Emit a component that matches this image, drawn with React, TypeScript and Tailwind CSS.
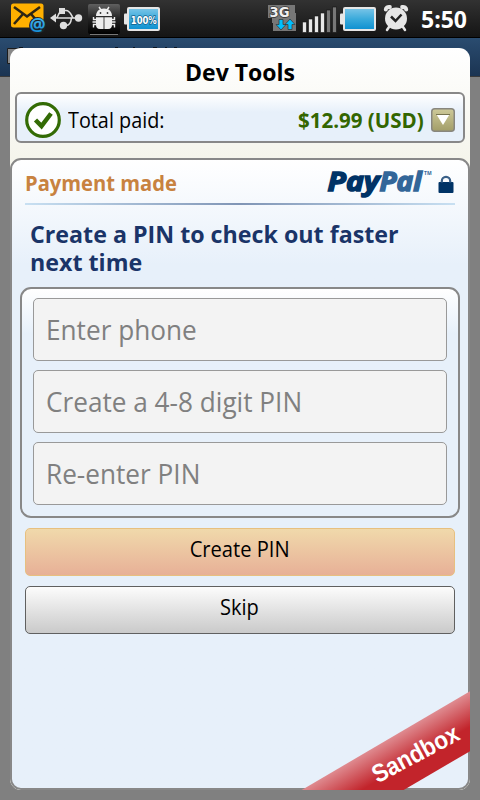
import type { ReactNode } from "react";

const FONT = "font-['Open_Sans','Noto_Sans',sans-serif]";

function StatusBar() {
  return (
    <header className="flex h-[38px] w-full shrink-0 border-b border-black bg-linear-to-b from-[#323232] to-[#151515]">
      <svg width="480" height="37" viewBox="0 0 480 37">
        <defs>
          <linearGradient id="cell" x1="0" y1="0" x2="0" y2="1">
            <stop offset="0" stopColor="#7cc6e8" />
            <stop offset="0.5" stopColor="#3aaadb" />
            <stop offset="1" stopColor="#0c8fd0" />
          </linearGradient>
          <linearGradient id="tile" x1="0" y1="0" x2="0" y2="1">
            <stop offset="0" stopColor="#606060" />
            <stop offset="0.5" stopColor="#222" />
            <stop offset="1" stopColor="#000" />
          </linearGradient>
          <linearGradient id="at" x1="0" y1="0" x2="0" y2="1">
            <stop offset="0" stopColor="#5cc8f8" />
            <stop offset="1" stopColor="#0a86d0" />
          </linearGradient>
        </defs>
        <rect x="11" y="3.500" width="32.500" height="24" rx="2.500" fill="#ffb000" />
        <path d="M14 7l13 9.500L40 7M14 24l9-10M38 22l-7-8" fill="none" stroke="#2d2614" strokeWidth="2.600" />
        <circle cx="37.500" cy="25.500" r="8.500" fill="#1d2226" />
        <text x="37.500" y="30.500" textAnchor="middle" fontFamily="Open Sans, sans-serif" fontSize="18" fontWeight="700" fill="url(#at)">@</text>
        <g fill="#dedede">
          <path d="M50 18l6-4.500v9z" />
          <rect x="59" y="8" width="6" height="6" />
          <circle cx="63.500" cy="25.500" r="3.700" />
          <circle cx="78.500" cy="18" r="3.700" />
        </g>
        <path d="M55 18h22M64 10.500h2c4 0 5 4 7 7.500M56 18c3-1 2-6 5-6M64 25.500h2c4 0 5-3 5.500-7.500" fill="none" stroke="#dedede" strokeWidth="1.600" />
        <rect x="88" y="4" width="32" height="30" rx="2" fill="url(#tile)" />
        <path d="M90 34.500h28" stroke="#777" />
        <g fill="#eee">
          <path d="M96 16c0-4.500 3-7.500 8-7.500s8 3 8 7.500z" />
          <path d="M96 17.200h7.600V29H100c-3 0-4-2-4-4zM104.400 17.200h7.600V25c0 2-1 4-4 4h-3.600z" />
        </g>
        <path d="M99 7l2 3M109 7l-2 3M96 19.500h-2.500v-2.500M112 19.500h2.500v-2.500M96 22h-3.500M112 22h3.500M96 24.500h-2.500v3M112 24.500h2.500v3" fill="none" stroke="#eee" strokeWidth="1.400" />
        <circle cx="100.500" cy="13" r="0.900" fill="#333" />
        <circle cx="107.500" cy="13" r="0.900" fill="#333" />
        <rect x="124" y="13.500" width="4" height="11" rx="1" fill="#e6e6e6" />
        <rect x="128" y="8" width="31" height="22" rx="1" fill="url(#cell)" stroke="#e6e6e6" strokeWidth="2" />
        <text x="143.800" y="23.500" textAnchor="middle" textLength="26" lengthAdjust="spacingAndGlyphs" fontFamily="DejaVu Sans, sans-serif" fontSize="11" fontWeight="700" fill="#fff" stroke="#13608c" strokeWidth="1.600" paintOrder="stroke">100%</text>

        <path d="M268 5h27v8h1v10h-24v-5h-4z" fill="#777" />
        <path d="M273 13h23v18h-23z" fill="#777" />
        <text x="269.500" y="17" textLength="20" lengthAdjust="spacingAndGlyphs" fontFamily="DejaVu Sans, sans-serif" fontSize="14" fontWeight="700" fill="#f0f0f0" stroke="#333" strokeWidth="1.500" paintOrder="stroke">3G</text>
        <path d="M279 19.500h4v5h3l-5 5.500-5-5.500h3zM288 29.500h4v-5h3l-5-5.500-5 5.500h3z" fill="#00c0ff" stroke="#333" strokeWidth="0.700" />
        <g stroke="#111" strokeWidth="0.600">
          <path d="M302.500 22h4v10.500h-4zM308.500 19h4v13.500h-4zM314.500 16h4v16.500h-4zM320.500 13h4v19.500h-4z" fill="#e8e8e8" />
          <path d="M326.500 10h4v22.500h-4zM332.500 7h4v25.500h-4z" fill="#777" />
        </g>
        <rect x="340" y="13.500" width="4" height="11" rx="1" fill="#e6e6e6" />
        <rect x="344" y="8" width="31" height="22" rx="1" fill="url(#cell)" stroke="#e6e6e6" strokeWidth="2" />
        <g stroke="#e6e6e6" fill="none" strokeLinecap="round">
          <path d="M385.800 9.500c0-1.500 2-3 4-2.500M406.200 9.500c0-1.500-2-3-4-2.500" strokeWidth="4" />
          <path d="M389 27l-2 3M403 27l2 3" strokeWidth="2.500" />
        </g>
        <circle cx="396" cy="18.500" r="11" fill="#e6e6e6" />
        <path d="M391 16.500l4.500 4.500 6-6.500" fill="none" stroke="#222" strokeWidth="2.500" />
        <text x="421" y="28" textLength="46" lengthAdjust="spacingAndGlyphs" fontFamily="Open Sans, sans-serif" fontSize="24" fontWeight="700" fill="#fff">5:50</text>
      </svg>
    </header>
  );
}

function Field({ children }: { children: ReactNode }) {
  return (
    <div className="flex h-[63px] items-center rounded-[5px] border border-[#999] bg-[#f3f3f3] pb-px pl-3 text-[28px] leading-none text-[#808080]">
      <span className="inline-block origin-left scale-x-[0.935] whitespace-nowrap">{children}</span>
    </div>
  );
}

function PayPalLogo() {
  return (
    <svg width="128" height="38" viewBox="0 0 128 38" className="shrink-0 overflow-visible">
      <g fontFamily="Open Sans, sans-serif" fontSize="27.500" fontWeight="700" fontStyle="italic" strokeWidth="1.500">
        <text x="0.500" y="28" textLength="52" lengthAdjust="spacingAndGlyphs" fill="#003366" stroke="#003366">Pay</text>
        <text x="52.500" y="28" textLength="42" lengthAdjust="spacingAndGlyphs" fill="#336699" stroke="#336699">Pal</text>
      </g>
      <text x="97" y="12" fontFamily="Open Sans, sans-serif" fontSize="5" fontWeight="700" fill="#336699">TM</text>
      <rect x="111.500" y="19" width="15" height="11" rx="1" fill="#003366" />
      <path d="M114.800 19.500V18a4.200 4.200 0 0 1 8.400 0v1.500" fill="none" stroke="#3a6088" strokeWidth="2.200" />
    </svg>
  );
}

export default function App() {
  return (
    <div className={`${FONT} flex h-[800px] w-[480px] flex-col overflow-hidden bg-[#808080] text-black`}>
      <StatusBar />
      <div className="h-[39px] shrink-0 border-b border-[#3a3a3a] bg-linear-to-b from-[#2a4c70] to-[#1b3452]">
        <svg width="200" height="30" viewBox="0 0 200 30">
          <path d="M7.500 10.500h14v15h-14z" fill="#888" stroke="#1c1c1c" />
          <path d="M19 9h4v2h-4zM115 9h3v2h-3zM133 9h2v2h-2zM153 9h4v2h-4zM165 9h2v2h-2zM174 9h3v2h-3z" fill="#0c1520" />
        </svg>
      </div>
      <main className="relative mx-[10px] -mt-[29px] flex h-[742px] shrink-0 flex-col overflow-hidden rounded-[11px] bg-linear-to-b from-white to-[#f5f5ec] to-[110px]">
        <h1 className="flex h-11 shrink-0 items-center justify-center pt-[5px] text-[23px] leading-none font-bold">
          <span className="inline-block">Dev Tools</span>
        </h1>
        <section className="mx-[5px] flex h-[51px] shrink-0 items-center rounded-[6px] border-2 border-[#888] bg-linear-to-b from-white to-[#e7f0fa] to-[18px] px-2 pt-1">
          <svg width="36" height="36" viewBox="0 0 36 36" className="shrink-0">
            <circle cx="18" cy="18" r="16.300" fill="#fff" stroke="#336b05" strokeWidth="3.200" />
            <path d="M10.500 18l6 6L26 11.500" fill="none" stroke="#336b05" strokeWidth="4.500" />
          </svg>
          <span className="ml-[7px] inline-block w-[130px] origin-left scale-x-[0.9] pb-[2px] text-[22px] leading-none">Total paid:</span>
          <span className="ml-auto inline-block origin-right scale-x-[0.955] text-[21.500px] leading-none font-bold whitespace-nowrap text-[#336600]">$12.99 (USD)</span>
          <svg width="24" height="24" viewBox="0 0 24 24" className="ml-[7px] shrink-0">
            <defs>
              <linearGradient id="olive" x1="0" y1="0" x2="0" y2="1">
                <stop offset="0" stopColor="#ceca9a" />
                <stop offset="1" stopColor="#a29d68" />
              </linearGradient>
            </defs>
            <rect x="0.750" y="0.750" width="22.500" height="22.500" rx="3" fill="url(#olive)" stroke="#88867e" strokeWidth="1.500" />
            <path d="M5.500 6.500h13L12 17z" fill="#fff" />
            <path d="M5 6.500h14" stroke="#77744f" />
          </svg>
        </section>
        <section className="mt-[15px] flex h-[632px] shrink-0 flex-col rounded-[11px] border-2 border-[#888] bg-linear-to-b from-white to-[#e7f0fa] to-[105px]">
          <div className="mr-[13px] ml-[13px] flex h-[43px] shrink-0 items-center justify-between">
            <h2 className="origin-left scale-x-[0.96] pt-[3px] text-[21px] leading-none font-bold whitespace-nowrap text-[#c88240]">Payment made</h2>
            <PayPalLogo />
          </div>
          <div className="mx-[13px] h-[2px] shrink-0 bg-linear-to-r from-[#c8e0f2] via-[#8095b5] to-[#c8e0f2]" />
          <h2 className="mt-[15px] ml-[18px] h-14 shrink-0 origin-left scale-x-[0.988] text-[23.500px] leading-[28px] font-bold whitespace-nowrap text-[#1a3468]">
            Create a PIN to check out faster
            <br />
            next time
          </h2>
          <div className="mx-2 mt-[11px] flex h-[231px] shrink-0 flex-col gap-[9px] rounded-[11px] border-2 border-[#888] bg-linear-to-b from-white to-[#e7f0fa] to-[45px] px-[11px] pt-[9px]">
            <Field>Enter phone</Field>
            <Field>Create a 4-8 digit PIN</Field>
            <Field>Re-enter PIN</Field>
          </div>
          <button className="mx-[13px] mt-[10px] flex h-12 shrink-0 items-center justify-center rounded-[5px] border border-[#e7c080] bg-linear-to-b from-[#f0d9ab] to-[#e7b097] pr-px pb-[8px] text-[22px] leading-none">
            <span className="inline-block scale-x-[0.915]">Create PIN</span>
          </button>
          <button className="mx-[13px] mt-[10px] flex h-12 shrink-0 items-center justify-center rounded-[5px] border border-[#606060] bg-linear-to-b from-[#fcfcfc] to-[#cacaca] pr-[2px] pb-[8px] text-[22px] leading-none">
            <span className="inline-block scale-x-[0.91]">Skip</span>
          </button>
        </section>
        <svg width="170" height="102" viewBox="300 688 170 102" className="absolute right-0 bottom-0">
          <defs>
            <linearGradient id="ribbon" gradientUnits="userSpaceOnUse" x1="380" y1="744" x2="408" y2="792">
              <stop offset="0" stopColor="#df8b90" />
              <stop offset="0.550" stopColor="#c2242b" />
              <stop offset="1" stopColor="#c2242b" />
            </linearGradient>
          </defs>
          <path d="M300 791L472 690v60l-70 41z" fill="url(#ribbon)" />
          <text transform="translate(377.500 783.500) rotate(-28)" textLength="95" lengthAdjust="spacingAndGlyphs" fontFamily="Liberation Sans, sans-serif" fontSize="25" fontWeight="700" fill="#fff">Sandbox</text>
        </svg>
      </main>
    </div>
  );
}
